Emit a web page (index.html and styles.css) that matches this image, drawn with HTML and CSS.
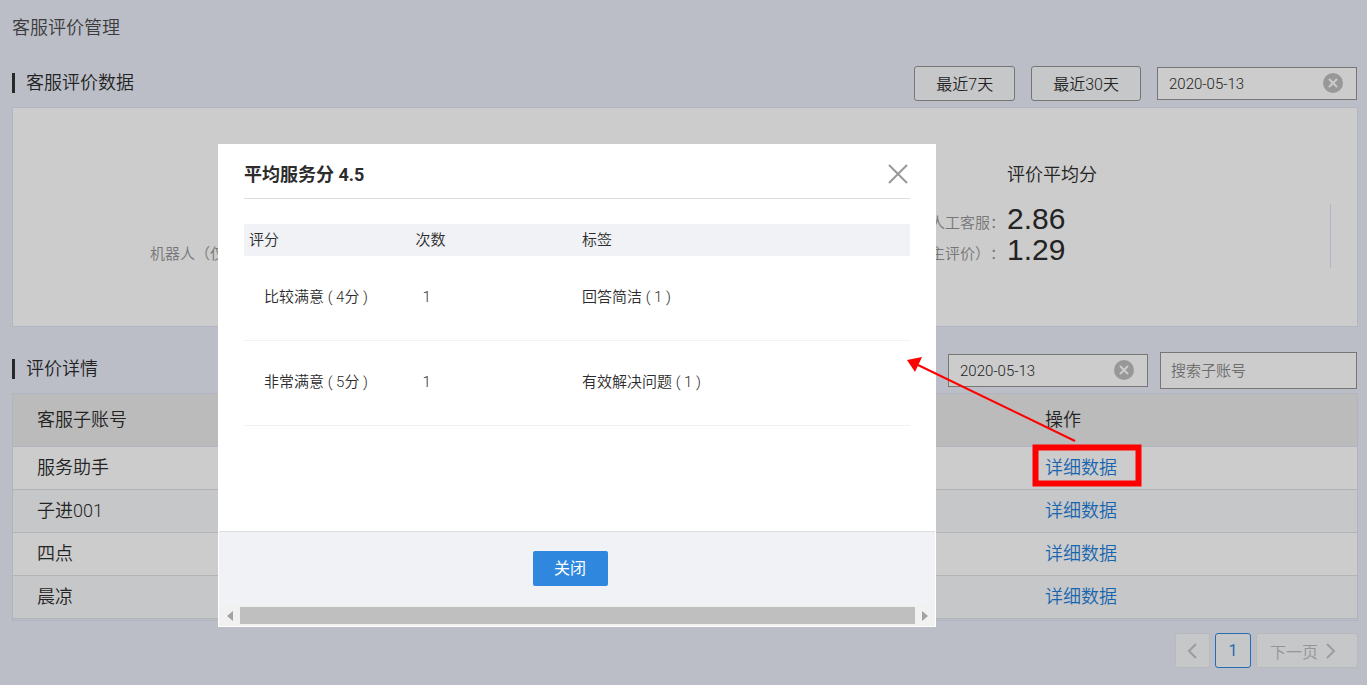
FILE: index.html
```html
<!DOCTYPE html>
<html lang="zh-CN">
<head>
<meta charset="utf-8">
<meta name="viewport" content="width=device-width, initial-scale=1">
<title>客服评价管理</title>
<link rel="stylesheet" href="styles.css">
</head>
<body>
<main class="page">
  <h1 class="page-title">客服评价管理</h1>

  <section>
    <div class="section-head">
      <h2 class="section-title">客服评价数据</h2>
      <div class="filters filters-wide">
        <button class="range-btn" type="button">最近7天</button>
        <button class="range-btn" type="button">最近30天</button>
        <div class="date-field">
          <input class="date-input" type="text" value="2020-05-13" aria-label="统计日期">
          <button class="clear-btn" type="button" aria-label="清除日期">
            <svg viewBox="0 0 20 20" width="20" height="20"><circle cx="10" cy="10" r="10"/><path d="M6 6l8 8M14 6l-8 8"/></svg>
          </button>
        </div>
      </div>
    </div>
    <div class="stats">
      <div class="metric">
        <span class="metric-label metric-robot">机器人（仅</span>
      </div>
      <div class="metric">
        <h3 class="metric-name">评价平均分</h3>
        <span class="metric-label">人工客服：</span><span class="metric-value">2.86</span>
        <span class="metric-label">主评价）：</span><span class="metric-value">1.29</span>
      </div>
    </div>
  </section>

  <section>
    <div class="section-head details-head">
      <h2 class="section-title">评价详情</h2>
      <div class="filters">
        <div class="date-field">
          <input class="date-input" type="text" value="2020-05-13" aria-label="详情日期">
          <button class="clear-btn" type="button" aria-label="清除日期">
            <svg viewBox="0 0 20 20" width="20" height="20"><circle cx="10" cy="10" r="10"/><path d="M6 6l8 8M14 6l-8 8"/></svg>
          </button>
        </div>
        <input class="search-input" type="text" placeholder="搜索子账号" aria-label="搜索子账号">
      </div>
    </div>
    <div class="table-frame">
      <table class="accounts">
        <thead><tr><th class="col-account">客服子账号</th><th>操作</th></tr></thead>
        <tbody>
          <tr><td>服务助手</td><td><a href="#d1">详细数据</a></td></tr>
          <tr><td>子进001</td><td><a href="#d2">详细数据</a></td></tr>
          <tr><td>四点</td><td><a href="#d3">详细数据</a></td></tr>
          <tr><td>晨凉</td><td><a href="#d4">详细数据</a></td></tr>
        </tbody>
      </table>
    </div>
    <nav class="pager" aria-label="分页">
      <button class="pager-btn" type="button" aria-label="上一页">
        <svg viewBox="0 0 10 16" width="10" height="16"><path d="M9 1L2 8l7 7"/></svg>
      </button>
      <button class="pager-btn pager-current" type="button">1</button>
      <button class="pager-btn pager-next" type="button">下一页
        <svg viewBox="0 0 10 16" width="10" height="16"><path d="M1 1l7 7-7 7"/></svg>
      </button>
    </nav>
  </section>
</main>

<div class="overlay"></div>

<div class="modal" role="dialog" aria-labelledby="modal-title">
  <div class="modal-body">
    <header class="modal-head">
      <h2 class="modal-title" id="modal-title">平均服务分 4.5</h2>
      <button class="close-btn" type="button" aria-label="关闭窗口">
        <svg viewBox="0 0 20 20" width="20" height="20"><path d="M1 1l18 18M19 1L1 19"/></svg>
      </button>
    </header>
    <table class="scores">
      <thead><tr><th>评分</th><th>次数</th><th class="col-tags">标签</th></tr></thead>
      <tbody>
        <tr><td class="score">比较满意 ( 4分 )</td><td class="count">1</td><td>回答简洁 ( 1 )</td></tr>
        <tr><td class="score">非常满意 ( 5分 )</td><td class="count">1</td><td>有效解决问题 ( 1 )</td></tr>
      </tbody>
    </table>
  </div>
  <footer class="modal-foot"><button class="primary-btn" type="button">关闭</button></footer>
  <div class="scrollbar" aria-hidden="true">
    <svg viewBox="0 0 6 10" width="6" height="10"><path d="M6 0v10L0 5z"/></svg>
    <div class="scroll-thumb"></div>
    <svg viewBox="0 0 6 10" width="6" height="10"><path d="M0 0v10l6-5z"/></svg>
  </div>
</div>

<svg class="callout" viewBox="0 0 236 132" width="236" height="132" aria-hidden="true">
  <path class="callout-line" d="M169 85L12 9"/>
  <path class="callout-head" d="M1 4L16 1L9 16z"/>
  <rect class="callout-box" x="129.5" y="91.5" width="103" height="36"/>
</svg>
</body>
</html>
```
FILE: styles.css
```css
* { box-sizing: border-box; }

body {
  margin: 0;
  min-height: 100vh;
  position: relative;
  background: #eaeef9;
  color: #2c2c2c;
  font: 350 18px/26px Roboto, "Noto Sans CJK SC", sans-serif;
}

h1, h2, h3 { margin: 0; font-size: 18px; font-weight: 350; }
button, input { font-family: inherit; font-weight: inherit; color: inherit; margin: 0; }
button { cursor: pointer; }
svg { display: block; }

.page { padding: 15px 9px 17px 12px; }
.page-title { color: #4c4c4c; }

.section-head {
  display: flex;
  align-items: center;
  justify-content: space-between;
  height: 35px;
  margin-top: 25px;
}
.section-title { display: flex; align-items: center; gap: 11px; margin-bottom: 2px; }
.section-title::before { content: ""; width: 3px; height: 20px; background: #333; }
.details-head { height: 37px; }
.details-head .section-title { margin-bottom: 4px; }

.filters { display: flex; align-items: center; gap: 12px; padding-right: 1px; }
.filters-wide { gap: 16px; }
.range-btn {
  height: 35px;
  padding: 0 21px 2px;
  border: 1px solid #949494;
  border-radius: 3px;
  background: #f8f9fb;
  font-size: 16px;
}
.date-field { position: relative; width: 200px; }
.date-input, .search-input {
  display: block;
  width: 100%;
  height: 33px;
  padding: 0 11px;
  border: 1px solid #949494;
  border-radius: 0;
  background: #fff;
  font-size: 15px;
}
.search-input { width: 197px; height: 37px; padding: 0 10px; }
.search-input::placeholder { color: #888; opacity: 1; }
.clear-btn {
  position: absolute;
  top: 6px;
  right: 14px;
  padding: 0;
  border: 0;
  background: none;
}
.clear-btn circle { fill: #bfbfbf; }
.clear-btn path { stroke: #fff; stroke-width: 2; }

.stats {
  display: grid;
  grid-template-columns: 1fr 1fr;
  column-gap: 6px;
  height: 220px;
  margin-top: 6px;
  padding-top: 54px;
  position: relative;
  border: 1px solid #dfe4f3;
  background: #fff;
}
.stats::after {
  content: "";
  position: absolute;
  top: 96px;
  right: 26px;
  height: 64px;
  border-right: 1px solid #dfe4f3;
}
.metric {
  display: grid;
  grid-template-columns: 180px 1fr;
  grid-template-rows: 26px 46px 31px;
  column-gap: 2px;
  align-items: end;
  align-content: start;
  padding-left: 137px;
}
.metric-name { grid-column: 2; }
.metric-label {
  color: #959595;
  font-family: "Noto Sans CJK TC", sans-serif;
  font-size: 15px;
  line-height: 24px;
  text-align: right;
  text-spacing-trim: space-all;
  white-space: nowrap;
}
.metric-robot { grid-row: 3; text-align: left; }
.metric-value { font: 400 30px/31px "Liberation Sans", Arial, sans-serif; }

.table-frame { margin-top: 4px; padding-bottom: 1px; border: 1px solid #dfe0f0; }
.accounts, .scores { width: 100%; border-spacing: 0; table-layout: fixed; }
.accounts th, .accounts td { padding: 0 24px; text-align: left; font-weight: 350; }
.accounts th { height: 53px; background: #eaeaea; border-bottom: 1px solid #dfe0f0; }
.accounts td { height: 43px; background: #fff; border-bottom: 1px solid #e2e2e4; }
.accounts tr:nth-child(even) td { background: #f8f9fb; }
.accounts a { color: #1f7fdb; text-decoration: none; }
.col-account { width: 75%; }

.pager { display: flex; justify-content: flex-end; gap: 5px; margin-top: 12px; }
.pager-btn {
  display: flex;
  align-items: center;
  justify-content: center;
  gap: 8px;
  min-width: 35px;
  height: 35px;
  padding: 0;
  border: 1px solid #e6e8ec;
  border-radius: 3px;
  background: #f8f9fb;
  color: #bbb;
  font-size: 16px;
}
.pager-btn path { fill: none; stroke: #c4c4c4; stroke-width: 2; }
.pager-current { min-width: 36px; border-color: #2f88de; color: #2f88de; font-weight: 400; }
.pager-next { padding: 0 21px 0 13px; }

.overlay { position: absolute; inset: 0; background: rgba(0, 0, 0, 0.2); }

.modal {
  position: absolute;
  top: 144px;
  left: 218px;
  width: 718px;
  padding: 0 1px 1px;
  background: #fff;
  font-size: 15px;
}
.modal-body { min-height: 387px; padding: 0 25px; }
.modal-head {
  display: flex;
  align-items: center;
  justify-content: space-between;
  height: 55px;
  padding-top: 5px;
  border-bottom: 1px solid #ddd;
}
.modal-title { padding-top: 3px; font-weight: 700; }
.close-btn { padding: 0 2px 0 0; border: 0; background: none; }
.close-btn path { stroke: #999; stroke-width: 2; }

.scores { margin-top: 25px; }
.scores th { height: 32px; padding: 0 5px; background: #f1f2f6; text-align: left; font-weight: 350; }
.scores td { height: 85px; padding: 0 5px 2px; border-bottom: 1px solid #f1f2f5; }
.scores .score { padding-left: 20px; }
.scores .count { padding-left: 12px; }
.col-tags { width: 50%; }

.modal-foot {
  display: flex;
  justify-content: center;
  height: 74px;
  padding: 19px 14px 0 0;
  border-top: 1px solid #ddd;
  background: #f1f2f6;
}
.primary-btn {
  width: 75px;
  height: 35px;
  padding: 0 0 3px;
  border: 0;
  border-radius: 2px;
  background: #2f88de;
  color: #fff;
  font-size: 16px;
  font-weight: 400;
}
.scrollbar {
  display: flex;
  align-items: center;
  gap: 7px;
  height: 21px;
  padding: 0 7px 0 8px;
  background: #f1f1f1;
}
.scrollbar path { fill: #a3a3a3; }
.scroll-thumb { flex: 1; height: 17px; background: #bfbfbf; }

.callout { position: absolute; top: 356px; left: 906px; pointer-events: none; }
.callout-line { stroke: #f00; stroke-width: 2; }
.callout-head { fill: #f00; }
.callout-box { fill: none; stroke: #f00; stroke-width: 6; }
```
